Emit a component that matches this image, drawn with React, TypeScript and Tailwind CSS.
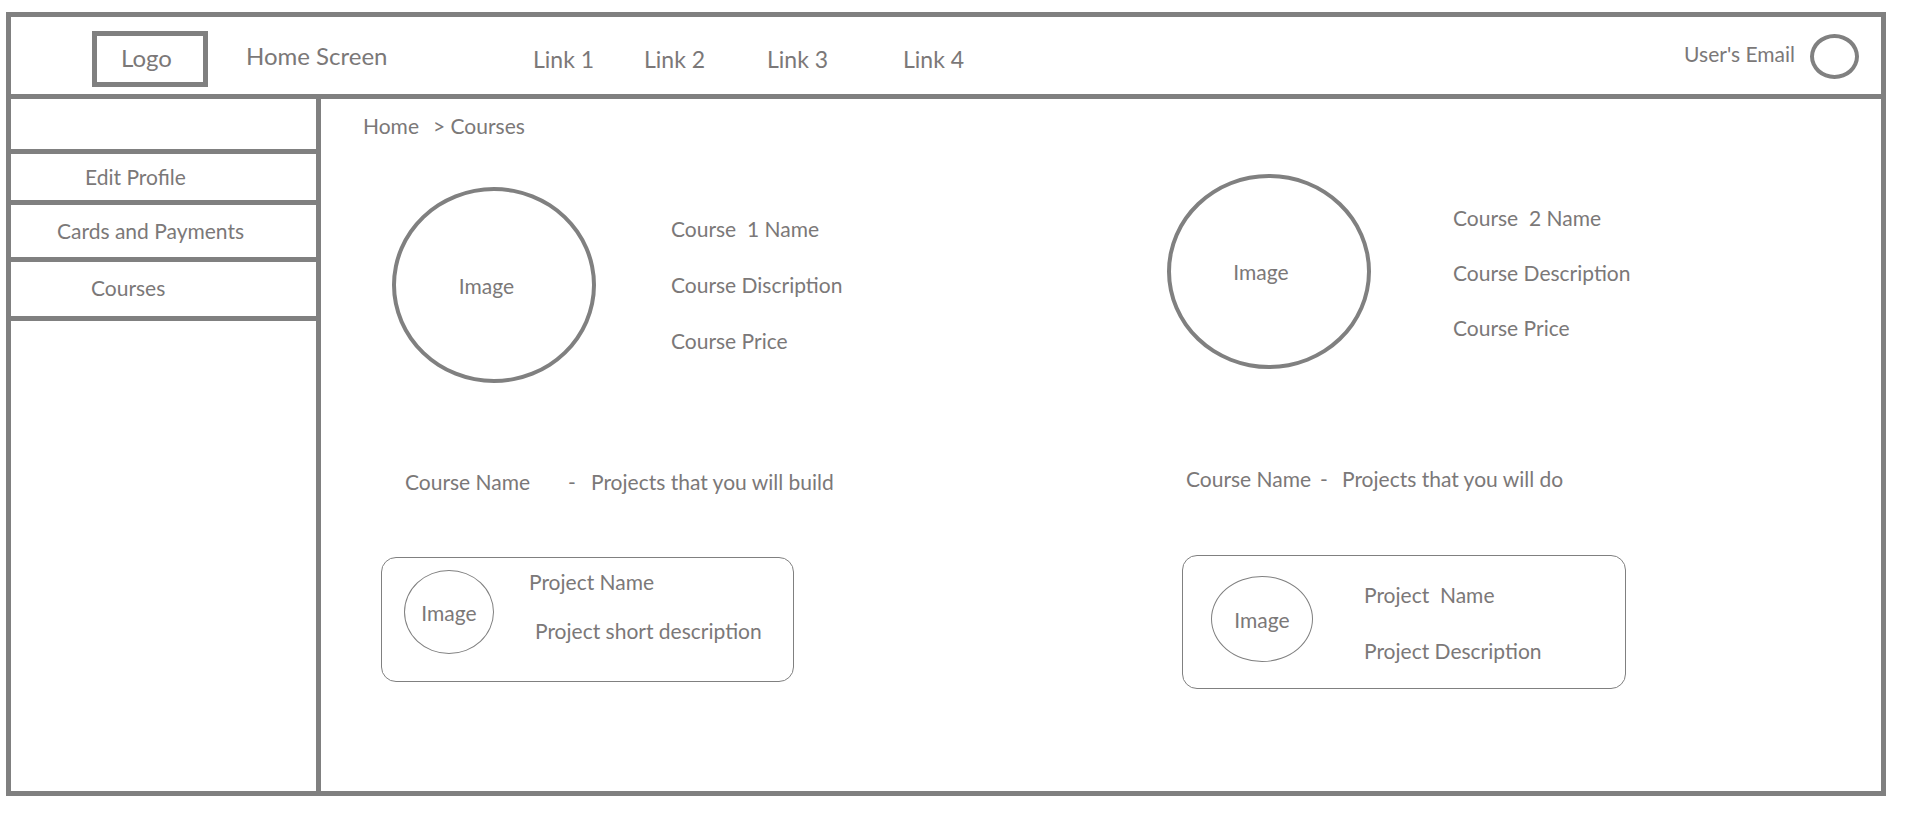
export default function App() {
  const t = "text-[#7b7878] leading-none whitespace-nowrap";
  return (
    <div className="w-[1914px] h-[822px] bg-white pt-[12px] pl-[6px] font-[family-name:Lato,sans-serif]">
      <div className="w-[1880px] h-[784px] border-[5px] border-[#808080] flex flex-col">
        {/* Header */}
        <div className="h-[82px] border-b-[5px] border-[#808080] flex items-start shrink-0">
          <div className="ml-[81px] mt-[14px] w-[116px] h-[56px] border-[5px] border-[#808080] flex items-center justify-center pr-[7px] pb-[3px]">
            <span className={`${t} text-[24px]`}>Logo</span>
          </div>
          <div className={`${t} text-[24px] ml-[38px] mt-[27px] w-[287px]`}>Home Screen</div>
          <div className={`${t} text-[23px] mt-[31px] w-[111px]`}>Link 1</div>
          <div className={`${t} text-[23px] mt-[31px] w-[123px]`}>Link 2</div>
          <div className={`${t} text-[23px] mt-[31px] w-[136px]`}>Link 3</div>
          <div className={`${t} text-[23px] mt-[31px]`}>Link 4</div>
          <div className={`${t} text-[21px] ml-auto mt-[26px]`}>User's Email</div>
          <div className="ml-[15px] mr-[22px] mt-[17px] w-[49px] h-[45px] rounded-[50%] border-[4px] border-[#808080]" />
        </div>
        {/* Body */}
        <div className="flex flex-1">
          <div className="w-[310px] border-r-[5px] border-[#808080] flex flex-col shrink-0">
            <div className="h-[55px] border-b-[5px] border-[#808080]" />
            <div className="h-[51px] border-b-[5px] border-[#808080] pl-[74px] pt-[12px]">
              <div className={`${t} text-[21px]`}>Edit Profile</div>
            </div>
            <div className="h-[57px] border-b-[5px] border-[#808080] pl-[46px] pt-[15px]">
              <div className={`${t} text-[21px]`}>Cards and Payments</div>
            </div>
            <div className="h-[59px] border-b-[5px] border-[#808080] pl-[80px] pt-[15px]">
              <div className={`${t} text-[21px]`}>Courses</div>
            </div>
          </div>
          <div className="flex-1 flex flex-col">
            <div className="pl-[42px] pt-[16px] h-[36px] flex">
              <span className={`${t} text-[21px]`}>Home</span>
              <span className={`${t} text-[21px] ml-[14px]`}>&gt; Courses</span>
            </div>
            <div className="flex">
              {/* Column 1 */}
              <div className="w-[829px] flex flex-col items-start">
                <div className="flex mt-[52px] ml-[71px]">
                  <div className="w-[204px] h-[196px] rounded-[50%] border-[4px] border-[#808080] flex items-center justify-center">
                    <span className={`${t} text-[21px] mr-[15px]`}>Image</span>
                  </div>
                  <div className="ml-[75px] pt-[31px] flex flex-col gap-[35px]">
                    <div className={`${t} text-[21px]`}>Course&nbsp; 1 Name</div>
                    <div className={`${t} text-[21px]`}>Course Discription</div>
                    <div className={`${t} text-[21px]`}>Course Price</div>
                  </div>
                </div>
                <div className={`${t} text-[21px] ml-[84px] mt-[88px] flex`}>
                  <span className="w-[163px]">Course Name</span>
                  <span className="w-[23px]">-</span>
                  <span>Projects that you will build</span>
                </div>
                <div className="ml-[60px] mt-[65px] w-[413px] h-[125px] border border-[#808080] rounded-[15px] flex items-start">
                  <div className="ml-[22px] mt-[12px] w-[90px] h-[84px] rounded-[50%] border border-[#808080] flex items-center justify-center">
                    <span className={`${t} text-[21px]`}>Image</span>
                  </div>
                  <div className="ml-[35px] mt-[13px] flex flex-col gap-[28px]">
                    <div className={`${t} text-[21px]`}>Project Name</div>
                    <div className={`${t} text-[21px] ml-[6px]`}>Project short description</div>
                  </div>
                </div>
              </div>
              {/* Column 2 */}
              <div className="flex-1 flex flex-col items-start">
                <div className="flex mt-[39px] ml-[17px]">
                  <div className="w-[204px] h-[195px] rounded-[50%] border-[4px] border-[#808080] flex items-center justify-center">
                    <span className={`${t} text-[21px] mr-[16px]`}>Image</span>
                  </div>
                  <div className="ml-[82px] pt-[33px] flex flex-col gap-[34px]">
                    <div className={`${t} text-[21px]`}>Course&nbsp; 2 Name</div>
                    <div className={`${t} text-[21px]`}>Course Description</div>
                    <div className={`${t} text-[21px]`}>Course Price</div>
                  </div>
                </div>
                <div className={`${t} text-[21px] ml-[36px] mt-[99px] flex`}>
                  <span className="w-[134px]">Course Name</span>
                  <span className="w-[22px]">-</span>
                  <span>Projects that you will do</span>
                </div>
                <div className="ml-[32px] mt-[66px] w-[444px] h-[134px] border border-[#808080] rounded-[15px] flex items-start">
                  <div className="ml-[28px] mt-[20px] w-[102px] h-[86px] rounded-[50%] border border-[#808080] flex items-center justify-center">
                    <span className={`${t} text-[21px]`}>Image</span>
                  </div>
                  <div className="ml-[51px] mt-[28px] flex flex-col gap-[35px]">
                    <div className={`${t} text-[21px]`}>Project&nbsp; Name</div>
                    <div className={`${t} text-[21px]`}>Project Description</div>
                  </div>
                </div>
              </div>
            </div>
          </div>
        </div>
      </div>
    </div>
  );
}
